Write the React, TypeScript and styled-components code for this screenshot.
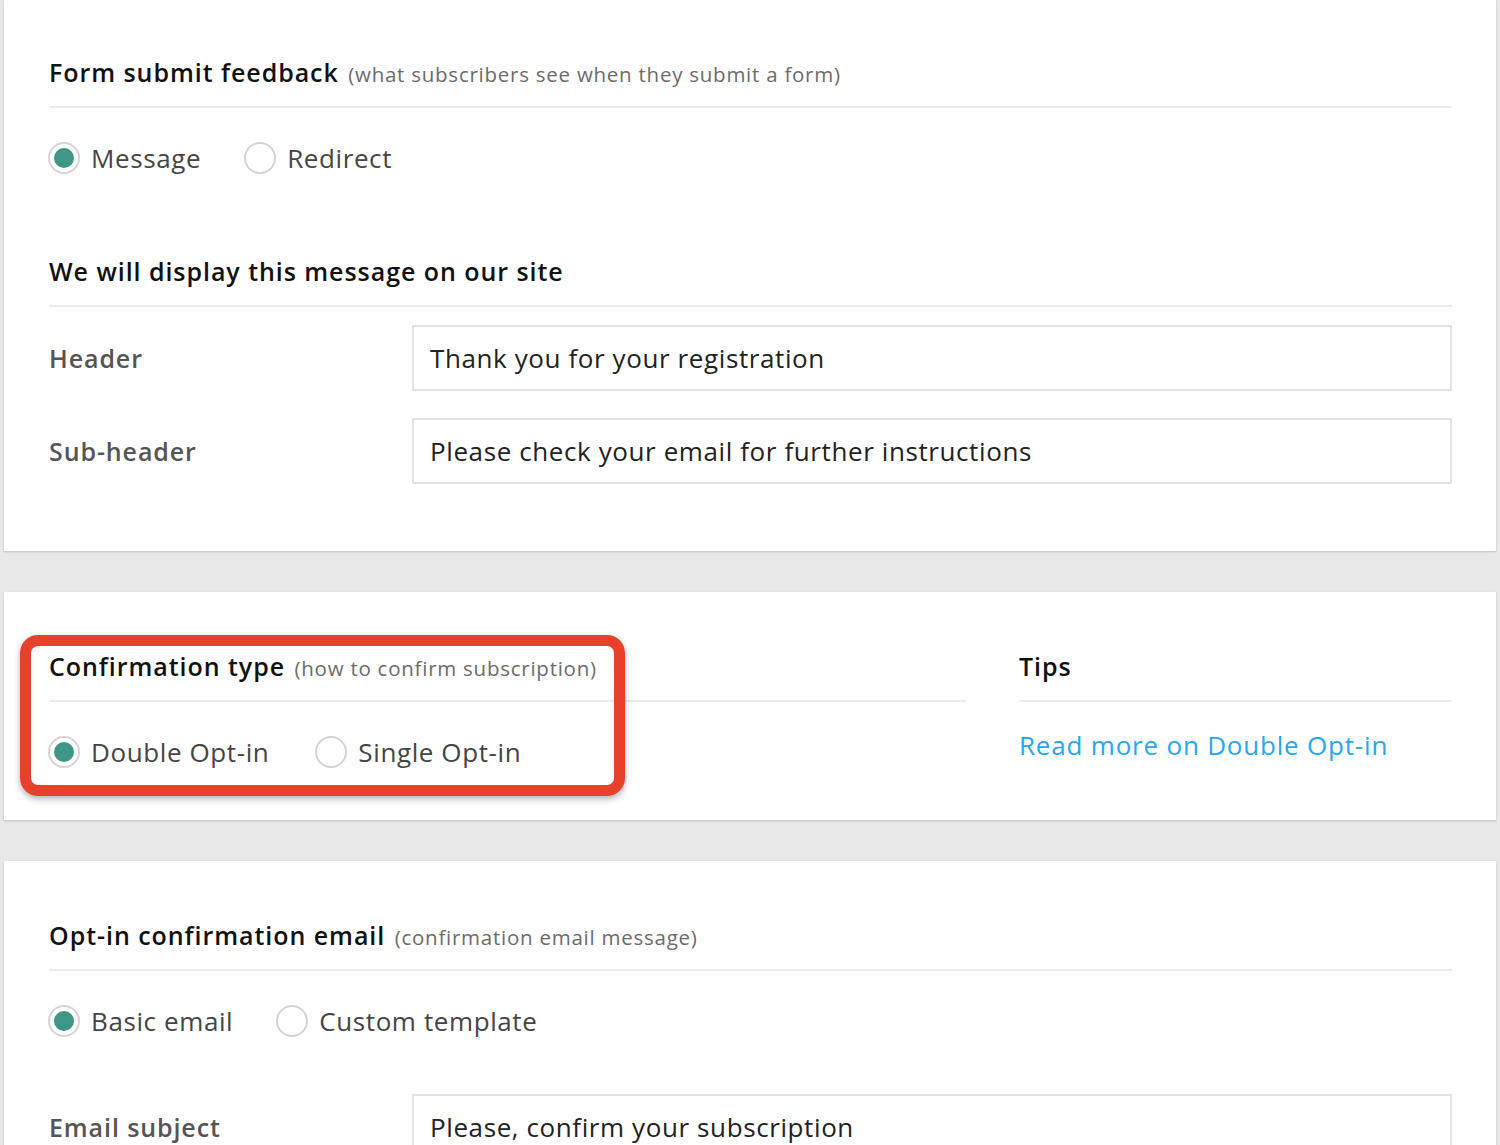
import React from "react";
import styled, { createGlobalStyle } from "styled-components";

const Global = createGlobalStyle`
  html, body { margin: 0; padding: 0; background: #e8e8e8; }
  body { font-family: "Open Sans", "Liberation Sans", sans-serif; -webkit-font-smoothing: antialiased; }
  * { box-sizing: border-box; }
`;

const Page = styled.div`
  width: 1500px;
  height: 1145px;
  overflow: hidden;
  padding: 0 4px;
  display: flex;
  flex-direction: column;
  gap: 41px;
`;

const Card = styled.section<{ $pt: number; $pb: number }>`
  position: relative;
  background: #fff;
  box-shadow: 0 1px 2px rgba(0, 0, 0, 0.18);
  padding: ${(p) => p.$pt}px 44px ${(p) => p.$pb}px 45px;
  flex-shrink: 0;
`;

const Columns = styled.div`
  display: grid;
  grid-template-columns: 917px 433px;
  column-gap: 53px;
`;

const Heading = styled.h2<{ $mt?: number }>`
  margin: ${(p) => p.$mt ?? 0}px 0 0;
  padding: 0 0 19px;
  border-bottom: 2px solid #ececec;
  font-size: 25px;
  line-height: 30px;
  height: 51px;
  font-weight: 600;
  color: #111;
  letter-spacing: 0.95px;
  white-space: nowrap;
`;

const Hint = styled.span`
  font-size: 20.5px;
  line-height: 20px;
  font-weight: 400;
  color: #6b6b6b;
  letter-spacing: 0.75px;
  margin-left: 2px;
`;

const RadioRow = styled.div<{ $gap: number }>`
  display: flex;
  align-items: center;
  gap: ${(p) => p.$gap}px;
  margin-top: 34px;
  height: 32px;
`;

const RadioOption = styled.label`
  display: flex;
  align-items: center;
  gap: 11px;
  font-size: 26px;
  line-height: 32px;
  color: #454545;
  letter-spacing: 0.6px;
  cursor: pointer;
`;

const RadioCircle = styled.span<{ $checked?: boolean }>`
  width: 32px;
  height: 32px;
  margin-left: -1px;
  border-radius: 50%;
  border: 2px solid #d4d4d4;
  display: flex;
  align-items: center;
  justify-content: center;
  flex-shrink: 0;
  &::after {
    content: "";
    width: 20px;
    height: 20px;
    border-radius: 50%;
    background: ${(p) => (p.$checked ? "#3e9684" : "transparent")};
  }
`;

const FieldRow = styled.div<{ $mt: number }>`
  display: grid;
  grid-template-columns: 363px 1fr;
  align-items: center;
  margin-top: ${(p) => p.$mt}px;
`;

const FieldLabel = styled.div`
  font-size: 25px;
  font-weight: 600;
  color: #555;
  letter-spacing: 0.9px;
`;

const TextBox = styled.div`
  height: 66px;
  border: 2px solid #e2e2e2;
  padding: 0 16px;
  display: flex;
  align-items: center;
  font-size: 26px;
  color: #222;
  letter-spacing: 0.6px;
`;

const TipLink = styled.a`
  display: block;
  margin-top: 26px;
  font-size: 26px;
  line-height: 34px;
  color: #29a6ee;
  text-decoration: none;
  letter-spacing: 0.8px;
`;

const Highlight = styled.div`
  position: absolute;
  left: 16px;
  top: 43px;
  width: 605px;
  height: 161px;
  border: 11px solid #e8412b;
  border-radius: 18px;
  box-shadow: 0 3px 6px rgba(0, 0, 0, 0.3);
  pointer-events: none;
`;

type Opt = { label: string; checked?: boolean };

const Radios = ({ options, gap }: { options: Opt[]; gap: number }) => (
  <RadioRow $gap={gap}>
    {options.map((o) => (
      <RadioOption key={o.label}>
        <RadioCircle $checked={o.checked} />
        {o.label}
      </RadioOption>
    ))}
  </RadioRow>
);

export default function App() {
  return (
    <>
      <Global />
      <Page>
        <Card $pt={57} $pb={67}>
          <Heading>
            Form submit feedback <Hint>(what subscribers see when they submit a form)</Hint>
          </Heading>
          <Radios gap={44} options={[{ label: "Message", checked: true }, { label: "Redirect" }]} />
          <Heading $mt={82}>We will display this message on our site</Heading>
          <FieldRow $mt={18}>
            <FieldLabel>Header</FieldLabel>
            <TextBox>Thank you for your registration</TextBox>
          </FieldRow>
          <FieldRow $mt={27}>
            <FieldLabel>Sub-header</FieldLabel>
            <TextBox>Please check your email for further instructions</TextBox>
          </FieldRow>
        </Card>

        <Card $pt={59} $pb={52}>
          <Columns>
            <div>
              <Heading>
                Confirmation type <Hint>(how to confirm subscription)</Hint>
              </Heading>
              <Radios gap={47} options={[{ label: "Double Opt-in", checked: true }, { label: "Single Opt-in" }]} />
            </div>
            <div>
              <Heading>Tips</Heading>
              <TipLink href="#">Read more on Double Opt-in</TipLink>
            </div>
          </Columns>
          <Highlight />
        </Card>

        <Card $pt={59} $pb={0}>
          <Heading>
            Opt-in confirmation email <Hint>(confirmation email message)</Hint>
          </Heading>
          <Radios gap={44} options={[{ label: "Basic email", checked: true }, { label: "Custom template" }]} />
          <FieldRow $mt={57}>
            <FieldLabel>Email subject</FieldLabel>
            <TextBox>Please, confirm your subscription</TextBox>
          </FieldRow>
        </Card>
      </Page>
    </>
  );
}
